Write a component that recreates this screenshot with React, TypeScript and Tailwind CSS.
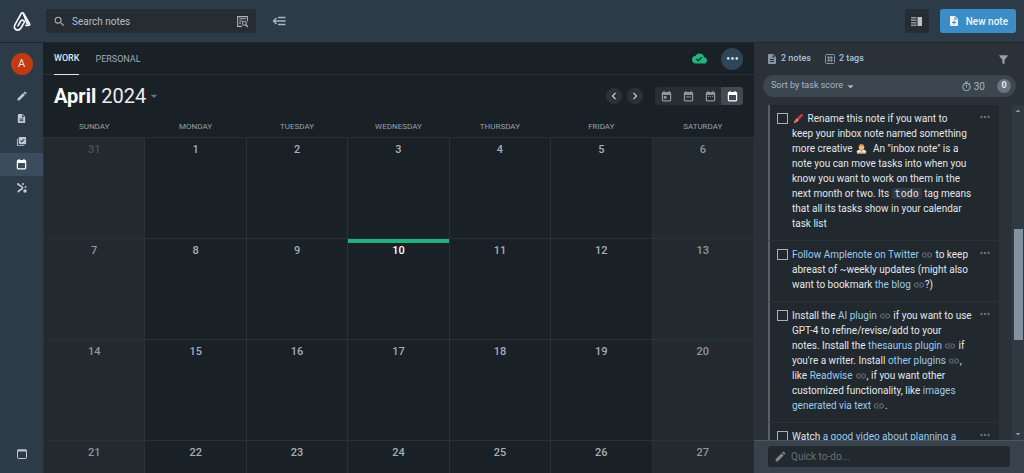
import React from 'react';
import clsx from 'clsx';
import {
  MdArrowDropDown,
  MdArrowDropUp,
  MdChevronLeft,
  MdChevronRight,
  MdCloudDone,
  MdDescription,
  MdEdit,
  MdFilterAlt,
  MdLibraryAddCheck,
  MdLink,
  MdMoreHoriz,
  MdNoteAdd,
  MdOutlineTimer,
  MdSearch,
} from 'react-icons/md';

const WEEKDAYS = ['SUNDAY', 'MONDAY', 'TUESDAY', 'WEDNESDAY', 'THURSDAY', 'FRIDAY', 'SATURDAY'];

const WEEKS = [
  [31, 1, 2, 3, 4, 5, 6],
  [7, 8, 9, 10, 11, 12, 13],
  [14, 15, 16, 17, 18, 19, 20],
  [21, 22, 23, 24, 25, 26, 27],
];

const TODAY = 10;

/* Icons */

const LogoIcon = () => (
  <svg viewBox="0 0 20 22" className="h-[21px] w-5" fill="none" stroke="#f4f7fa" strokeWidth="1.7" strokeLinecap="round" strokeLinejoin="round">
    <path d="M14 15h3c1 0 1.400-.7 1-1.500L11.700 2.600c-.6-1-1.900-1-2.500 0L2.500 14.500c-1.500 3 .4 5.500 3 5.500 1.500 0 2.500-.8 3.200-1.900l3.300-5.700c1.200-2.200-1.900-4.100-3.300-1.900l-2.900 5" />
    <path d="M11 2.500l4 11 2 .5-5-10z" fill="#f4f7fa" strokeWidth="1" />
  </svg>
);

const SearchNoteIcon = () => (
  <svg viewBox="0 0 24 24" className="size-[13px]" fill="none" stroke="currentColor" strokeWidth="2">
    <path d="M11 21H3V3h18v9M6 7h12M6 11h6M6 15h3" />
    <circle cx="15.500" cy="15.500" r="3.500" />
    <path d="M18 18l4 4" strokeWidth="2.500" />
  </svg>
);

const CollapseIcon = () => (
  <svg viewBox="0 0 28 20" className="h-[10px] w-[14px]" fill="none" stroke="currentColor" strokeWidth="2.800">
    <path d="M3 10h24M12 3h15M12 17h15M9 4l-6 6 6 6" />
  </svg>
);

const GraphIcon = () => (
  <svg viewBox="0 0 24 24" className="size-3" fill="currentColor">
    <path d="M4 5l6 3M5 18l5-3M10 8c4 2 4 5 0 7" fill="none" stroke="currentColor" strokeWidth="3.500" />
    <circle cx="4" cy="4" r="2" />
    <circle cx="14" cy="4" r="2" />
    <circle cx="19" cy="10" r="2" />
    <circle cx="18" cy="18" r="3.500" />
    <circle cx="5" cy="19" r="2" />
  </svg>
);

const SplitIcon = () => (
  <svg viewBox="0 0 11 9" className="h-[9px] w-[11px]" fill="currentColor">
    <path d="M6.500 0H11v9H6.500z" />
    <path d="M0 0h5.500v1.500H0zM0 2.500h5.500V4H0zM0 5h5.500v1.500H0zM0 7.500h5.500V9H0z" opacity=".7" />
  </svg>
);

const TagIcon = () => (
  <svg viewBox="0 0 20 20" className="mr-1 ml-[14px] size-[10px] text-[#8796a2]" fill="none" stroke="currentColor" strokeWidth="2">
    <rect x="1" y="1" width="18" height="18" rx="2" />
    <path d="M7.500 4v12M12.500 4v12M4 7.500h12M4 12.500h12" />
  </svg>
);

const CalendarIcon = ({ mark = '', className = 'size-[11px]' }: { mark?: string; className?: string }) => (
  <svg viewBox="0 0 20 20" className={className} fill="none" stroke="currentColor" strokeWidth="2.200">
    <rect x="2.500" y="3" width="15" height="15" rx="1.500" />
    <path d="M2 5h16" strokeWidth="4.500" />
    <path d="M5.500 0v4M14.500 0v4" />
    {mark && <path d={mark} fill="currentColor" stroke="none" />}
  </svg>
);

const CrayonIcon = () => (
  <svg viewBox="0 0 12 12" className="mx-px inline size-[11px] align-[-2px]">
    <path d="M1 11l1-3 2 2z" fill="#f2b06a" />
    <path d="M2 8l6.500-6.600c1.500-1.200 3.200.6 2.100 2L4 10z" fill="#d9364b" />
    <path d="M2.500 7.500l2 2 1.500-1.500-2-2z" fill="#f08a72" />
  </svg>
);

const PersonIcon = () => (
  <svg viewBox="0 0 12 12" className="mx-px inline size-[11px] align-[-2px]">
    <path d="M1 11V9c1-2 3-2 5-2s4 0 5 2v2z" fill="#e8e4df" />
    <circle cx="6" cy="4.500" r="3" fill="#f3bd82" />
    <path d="M3 4c0-4 6-4 6 0L6 3z" fill="#d98a35" />
    <path d="M4.500 8.500l1.500-1 1.500 1-1.500 1z" fill="#e06a4f" />
    <path d="M1 10.500h10V12H1z" fill="#b9814f" />
  </svg>
);

const VIEWS = [
  { name: 'Day', mark: 'M5 9h5v5H5z' },
  { name: 'Three days', mark: 'M5 10h10v2H5z' },
  { name: 'Week', mark: 'M5 9h2v2H5zM9 9h2v2H9zM13 9h2v2h-2z' },
  { name: 'Month', mark: '' },
];

/* Top bar */

const TopBar = () => (
  <header className="flex h-[43px] shrink-0 items-center border-b border-[#20262c] bg-[#2d3a47] pr-2">
    <a href="#home" aria-label="Home" className="flex w-[43px] shrink-0 justify-center">
      <LogoIcon />
    </a>
    <label className="ml-[3px] flex h-6 w-[210px] items-center gap-1.5 rounded-[3px] bg-[#252c32] px-[7px] text-[#a9b4be]">
      <MdSearch size={13} />
      <input
        aria-label="Search notes"
        placeholder="Search notes"
        className="min-w-0 flex-1 bg-transparent text-[10px] outline-none placeholder:text-[#b4bec7]"
      />
      <SearchNoteIcon />
    </label>
    <button aria-label="Collapse" className="ml-4 text-[#a9b8c5]">
      <CollapseIcon />
    </button>
    <button aria-label="Split view" className="ml-auto flex size-6 items-center justify-center rounded-[3px] bg-[#252c32] text-[#bcc4ca]">
      <SplitIcon />
    </button>
    <button className="ml-[11px] flex h-6 items-center gap-1.5 rounded-[3px] bg-[#3c8dc5] px-2 text-[10px] font-medium text-[#eef6fb]">
      <MdNoteAdd size={12} />
      New note
    </button>
  </header>
);

/* Left rail */

const NAV = [
  { name: 'Jots', icon: <MdEdit size={12} /> },
  { name: 'Notes', icon: <MdDescription size={11} /> },
  { name: 'Tasks', icon: <MdLibraryAddCheck size={11} /> },
  { name: 'Calendar', icon: <CalendarIcon />, active: true },
  { name: 'Graph', icon: <GraphIcon /> },
];

const Rail = () => (
  <nav className="flex w-[43px] shrink-0 flex-col items-center bg-[#2d3a47] pt-2.5 text-[#bdc9d3]">
    <button aria-label="Account" className="mb-[9px] size-[22px] shrink-0 rounded-full bg-[#c23a12] text-[11px] text-[#f6ded6]">
      A
    </button>
    {NAV.map((item) => (
      <a
        key={item.name}
        href={`#${item.name.toLowerCase()}`}
        aria-label={item.name}
        className={clsx('flex h-[23px] w-full items-center justify-center', item.active && 'bg-[#3b4d5d] text-white')}
      >
        {item.icon}
      </a>
    ))}
    <button aria-label="Toggle panel" className="mt-auto mb-3.5">
      <svg viewBox="0 0 10 10" className="size-[10px]" fill="none" stroke="currentColor">
        <rect x="0.500" y="1" width="9" height="8.500" rx="1" />
        <path d="M0.500 1.500h9" strokeWidth="2" />
      </svg>
    </button>
  </nav>
);

/* Calendar */

const Calendar = () => (
  <main className="flex min-w-0 flex-1 flex-col overflow-hidden bg-[#192026]">
    <div className="flex h-8 shrink-0 items-center border-b border-[#2a3138] px-[11px] text-[9px]">
      <a href="#work" className="flex h-8 items-center border-b border-[#dfe5ea] pt-0.5 font-medium text-[#dfe5ea]">
        WORK
      </a>
      <a href="#personal" className="ml-4 pt-0.5 text-[#a1abb3]">
        PERSONAL
      </a>
      <MdCloudDone size={15} className="ml-auto text-[#20b57c]" />
      <button aria-label="More" className="ml-3.5 flex size-[22px] items-center justify-center rounded-full bg-[#2f4656] text-[#b7dcf3]">
        <MdMoreHoriz size={17} />
      </button>
    </div>

    <div className="flex h-[42px] shrink-0 items-center px-[11px]">
      <h1 className="text-[20px] text-[#e9edf0]">
        <span className="font-bold text-white">April</span> 2024
      </h1>
      <button aria-label="Choose month" className="text-[#69737b]">
        <MdArrowDropDown size={16} />
      </button>
      <div className="ml-auto flex gap-[5px] text-[#d0d6db]">
        <button aria-label="Previous month" className="flex size-4 items-center justify-center rounded-full bg-[#2a3138]">
          <MdChevronLeft size={14} />
        </button>
        <button aria-label="Next month" className="flex size-4 items-center justify-center rounded-full bg-[#2a3138]">
          <MdChevronRight size={14} />
        </button>
      </div>
      <div className="ml-3 flex overflow-hidden rounded-[3px] bg-[#272e34]">
        {VIEWS.map((view) => (
          <button
            key={view.name}
            aria-label={view.name}
            className={clsx(
              'flex h-[18px] w-[22px] items-center justify-center',
              view.name === 'Month' ? 'bg-[#414a53] text-white' : 'text-[#8b959d]'
            )}
          >
            <CalendarIcon mark={view.mark} />
          </button>
        ))}
      </div>
    </div>

    <table className="w-full table-fixed border-collapse text-center">
      <thead>
        <tr className="h-5 text-[8px] leading-[10px] text-[#98a1a8]">
          {WEEKDAYS.map((day) => (
            <th key={day} className="p-0 font-normal">
              {day}
            </th>
          ))}
        </tr>
      </thead>
      <tbody>
        {WEEKS.map((week) => (
          <tr key={week[0]} className="h-[101px] align-top">
            {week.map((day, i) => {
              const weekend = i === 0 || i === 6;
              return (
                <td
                  key={day}
                  className={clsx(
                    'border border-[#2a3036] p-0 text-[11px] leading-4 font-medium',
                    weekend ? 'bg-[#22292f]' : 'bg-[#192026]',
                    day === 31 && 'text-[#495158]',
                    day === TODAY && 'text-white',
                    day !== 31 && day !== TODAY && (weekend ? 'text-[#8f989f]' : 'text-[#a7afb5]')
                  )}
                >
                  <div className={clsx('h-1', day === TODAY && 'bg-[#22b07d]')} />
                  {day}
                </td>
              );
            })}
          </tr>
        ))}
      </tbody>
    </table>
  </main>
);

/* Task panel */

const TaskLink = ({ children, plain }: { children: React.ReactNode; plain?: boolean }) => (
  <>
    <a href="#link" className="text-[#9ccbec]">
      {children}
    </a>
    {!plain && <MdLink size={12} className="ml-0.5 inline align-[-3px] text-[#6a757e]" />}
  </>
);

const TASKS = [
  {
    id: 'rename',
    body: (
      <>
        <CrayonIcon /> Rename this note if you want to
        <br />
        keep your inbox note named something more creative <PersonIcon />
        {'\u00a0 '}
        An "inbox note" is a note you can move tasks into when you know you want to work on them in the next month or
        two. Its{' '}
        <code className="rounded-[2px] bg-[#30373e] px-[3px] font-['DejaVu_Sans_Mono',monospace] text-[10px]">todo</code>{' '}
        tag means that all its tasks show in your calendar task list
      </>
    ),
  },
  {
    id: 'follow',
    body: (
      <>
        <TaskLink>Follow Amplenote on Twitter</TaskLink> to keep abreast of ~weekly updates (might also want to
        bookmark <TaskLink>the blog</TaskLink>?)
      </>
    ),
  },
  {
    id: 'install',
    body: (
      <>
        Install the <TaskLink>AI plugin</TaskLink> if you want to use GPT-4 to refine/revise/add to your
        <br />
        notes. Install the <TaskLink>thesaurus plugin</TaskLink> if you're a writer. Install{' '}
        <TaskLink>other plugins</TaskLink>, like <TaskLink>Readwise</TaskLink>, if you want other customized
        functionality, like <TaskLink>images generated via text</TaskLink>.
      </>
    ),
  },
  {
    id: 'watch',
    body: (
      <>
        Watch <TaskLink plain>a good video about planning a</TaskLink>
      </>
    ),
  },
];

const TaskPanel = () => (
  <aside className="flex w-[270px] shrink-0 flex-col bg-[#2a3138]">
    <div className="flex h-8 shrink-0 items-center pr-3.5 pl-3 text-[9px] font-medium text-[#a5c3d9]">
      <MdDescription size={12} className="mr-[3px] text-[#8796a2]" />
      <a href="#notes">2 notes</a>
      <TagIcon />
      <a href="#tags">2 tags</a>
      <button aria-label="Filter" className="ml-auto text-[#95a0a9]">
        <MdFilterAlt size={13} />
      </button>
    </div>

    <div className="mr-2 ml-[9px] flex h-[22px] shrink-0 items-center rounded-full bg-[#3c4650] pr-[5px] pl-2 text-[9px] text-[#a8b5c0]">
      <button className="flex items-center">
        Sort by task score
        <MdArrowDropDown size={15} />
      </button>
      <MdOutlineTimer size={11} className="ml-auto" />
      <span className="mr-3 ml-0.5 text-[10px]">30</span>
      <span className="flex size-[14px] items-center justify-center rounded-full bg-[#69737d] text-[9px] font-bold text-[#e6eaed]">
        0
      </span>
    </div>

    <div className="mt-2 flex min-h-0 flex-1">
      <ul className="min-w-0 flex-1 overflow-hidden pr-[13px] pl-3.5">
        {TASKS.map((task) => (
          <li
            key={task.id}
            className="flex border-b border-l-2 border-b-[#2a3138] border-l-[#56616c] bg-[#21282e] pt-1.5 pr-[7px] pb-[9px] pl-[7px]"
          >
            <input
              id={task.id}
              type="checkbox"
              className="mt-0.5 mr-1 size-[11px] shrink-0 appearance-none border border-[#a3b1bd]"
            />
            <label htmlFor={task.id} className="min-w-0 flex-1 text-[10px] leading-[15px] text-[#e2e7eb]">
              {task.body}
            </label>
            <button aria-label="Task options" className="-mt-px ml-1 h-[14px] shrink-0 text-[#68737c]">
              <MdMoreHoriz size={14} />
            </button>
          </li>
        ))}
      </ul>
      <div className="flex w-3 shrink-0 flex-col items-center bg-[#303941] text-[#8b98a4]">
        <MdArrowDropUp size={12} className="shrink-0" />
        <div className="flex-[112]" />
        <div className="w-[9px] flex-[112] bg-[#8391a1]" />
        <div className="flex-[88]" />
        <MdArrowDropDown size={12} className="shrink-0" />
      </div>
    </div>

    <div className="shrink-0 border-t border-[#4a5661] bg-[#37424d] px-3.5 pt-[5px] pb-1.5">
      <label className="flex h-[21px] items-center gap-1 rounded-[3px] bg-[#21282e] px-1.5 text-[#7d8790]">
        <MdEdit size={13} />
        <input
          aria-label="Quick to-do"
          placeholder="Quick to-do..."
          className="min-w-0 flex-1 bg-transparent text-[10px] outline-none placeholder:text-[#65707a]"
        />
      </label>
    </div>
  </aside>
);

export default function App() {
  return (
    <div className="flex h-screen flex-col overflow-hidden bg-[#192026] font-['Roboto',sans-serif]">
      <TopBar />
      <div className="flex min-h-0 flex-1">
        <Rail />
        <Calendar />
        <TaskPanel />
      </div>
    </div>
  );
}
